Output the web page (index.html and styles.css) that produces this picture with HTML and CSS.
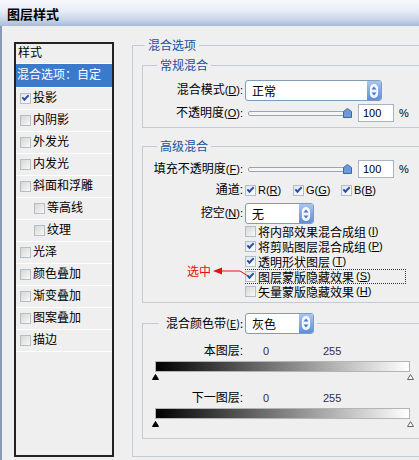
FILE: index.html
```html
<!DOCTYPE html>
<html lang="zh-CN">

<head>
    <meta charset="UTF-8">
    <meta name="viewport" content="width=device-width, initial-scale=1.0">
    <title>图层样式</title>
    <link rel="stylesheet" href="styles.css">
</head>

<body>
    <div class="titlebar">图层样式</div>

    <div class="content">
        <ul class="styles-list">
            <li class="head">样式</li>
            <li class="active">混合选项：自定</li>
            <li><span class="cb on"></span>投影</li>
            <li><span class="cb"></span>内阴影</li>
            <li><span class="cb"></span>外发光</li>
            <li><span class="cb"></span>内发光</li>
            <li><span class="cb"></span>斜面和浮雕</li>
            <li class="sub"><span class="cb"></span>等高线</li>
            <li class="sub"><span class="cb"></span>纹理</li>
            <li><span class="cb"></span>光泽</li>
            <li><span class="cb"></span>颜色叠加</li>
            <li><span class="cb"></span>渐变叠加</li>
            <li><span class="cb"></span>图案叠加</li>
            <li><span class="cb"></span>描边</li>
        </ul>

        <fieldset class="panel">
            <legend>混合选项</legend>

            <!-- 常规混合 -->
            <fieldset class="group">
                <legend>常规混合</legend>
                <div class="row row-mode">
                    <span class="label">混合模式<span class="key">(<u>D</u>):</span></span>
                    <div class="select select-mode"><span>正常</span><span class="spin"><svg width="8" height="14" viewBox="0 0 8 14"><rect x="0.5" y="0.5" width="7" height="13" rx="3.5" fill="#eef4fd" stroke="#fff"/><path d="M4 2.5 L6.5 5.5 H1.5 Z M4 11.5 L6.5 8.5 H1.5 Z" fill="#4a78c4"/></svg></span></div>
                </div>
                <div class="row row-amount">
                    <span class="label">不透明度<span class="key">(<u>O</u>):</span></span>
                    <div class="amount">
                        <span class="track"></span>
                        <svg class="thumb" width="9" height="10" viewBox="0 0 9 10"><path d="M0.5 9.5 V3.5 L4.5 0.5 L8.5 3.5 V9.5 Z" fill="#6f9ad8" stroke="#3f68a8"/></svg>
                        <span class="num-box">100</span>
                        <span class="pct">%</span>
                    </div>
                </div>
            </fieldset>

            <!-- 高级混合 -->
            <fieldset class="group group-adv">
                <legend>高级混合</legend>
                <div class="row row-fill">
                    <span class="label">填充不透明度<span class="key">(<u>F</u>):</span></span>
                    <div class="amount">
                        <span class="track"></span>
                        <svg class="thumb" width="9" height="10" viewBox="0 0 9 10"><path d="M0.5 9.5 V3.5 L4.5 0.5 L8.5 3.5 V9.5 Z" fill="#6f9ad8" stroke="#3f68a8"/></svg>
                        <span class="num-box">100</span>
                        <span class="pct">%</span>
                    </div>
                </div>
                <div class="row row-channels">
                    <span class="label">通道:</span>
                    <div class="channels">
                        <span class="channel"><span class="cb on"></span><span class="key">R(<u>R</u>)</span></span>
                        <span class="channel"><span class="cb on"></span><span class="key">G(<u>G</u>)</span></span>
                        <span class="channel"><span class="cb on"></span><span class="key">B(<u>B</u>)</span></span>
                    </div>
                </div>
                <div class="row row-knock">
                    <span class="label">挖空<span class="key">(<u>N</u>):</span></span>
                    <div class="select select-short"><span>无</span><span class="spin"><svg width="8" height="14" viewBox="0 0 8 14"><rect x="0.5" y="0.5" width="7" height="13" rx="3.5" fill="#eef4fd" stroke="#fff"/><path d="M4 2.5 L6.5 5.5 H1.5 Z M4 11.5 L6.5 8.5 H1.5 Z" fill="#4a78c4"/></svg></span></div>
                </div>
                <div class="checks">
                    <div class="check"><span class="cb"></span>将内部效果混合成组<span class="key">(<u>I</u>)</span></div>
                    <div class="check"><span class="cb on"></span>将剪贴图层混合成组<span class="key">(<u>P</u>)</span></div>
                    <div class="check"><span class="cb on"></span>透明形状图层<span class="key">(<u>T</u>)</span></div>
                    <div class="check focus">
                        <span class="cb on"></span>图层蒙版隐藏效果<span class="key">(<u>S</u>)</span>
                        <span class="note">选中</span>
                        <svg class="note-arrow" width="40" height="14" viewBox="0 0 40 14"><path d="M1 5 L10 1.5 V8.5 Z" fill="#e41010"/><path d="M10 5 H28 L36 10" fill="none" stroke="#e41010"/></svg>
                    </div>
                    <div class="check"><span class="cb"></span>矢量蒙版隐藏效果<span class="key">(<u>H</u>)</span></div>
                </div>
            </fieldset>

            <!-- 混合颜色带 -->
            <fieldset class="group group-band">
                <legend>
                    <div class="band-head">
                        <span class="band-label">混合颜色带<span class="key">(<u>E</u>):</span></span>
                        <div class="select select-short"><span>灰色</span><span class="spin"><svg width="8" height="14" viewBox="0 0 8 14"><rect x="0.5" y="0.5" width="7" height="13" rx="3.5" fill="#eef4fd" stroke="#fff"/><path d="M4 2.5 L6.5 5.5 H1.5 Z M4 11.5 L6.5 8.5 H1.5 Z" fill="#4a78c4"/></svg></span></div>
                    </div>
                </legend>

                <div class="row row-range">
                    <span class="label">本图层:</span>
                    <div class="range"><span class="lo">0</span><span class="hi">255</span></div>
                </div>
                <div class="ramp"></div>
                <div class="stops">
                    <svg width="7" height="6" viewBox="0 0 7 6"><path d="M3.5 0.5 L6.5 5.5 H0.5 Z" fill="#000" stroke="#000"/></svg>
                    <svg width="7" height="6" viewBox="0 0 7 6"><path d="M3.5 0.5 L6.5 5.5 H0.5 Z" fill="#fff" stroke="#666"/></svg>
                </div>

                <div class="row row-range row-under">
                    <span class="label">下一图层:</span>
                    <div class="range"><span class="lo">0</span><span class="hi">255</span></div>
                </div>
                <div class="ramp"></div>
                <div class="stops">
                    <svg width="7" height="6" viewBox="0 0 7 6"><path d="M3.5 0.5 L6.5 5.5 H0.5 Z" fill="#000" stroke="#000"/></svg>
                    <svg width="7" height="6" viewBox="0 0 7 6"><path d="M3.5 0.5 L6.5 5.5 H0.5 Z" fill="#fff" stroke="#666"/></svg>
                </div>
            </fieldset>
        </fieldset>
    </div>
</body>

</html>
```

FILE: styles.css
```css
body {
    margin: 0;
    width: 419px;
    height: 460px;
    overflow: hidden;
    background-color: #efefef;
    font-family: "Liberation Sans", "Noto Sans CJK SC", sans-serif;
    font-size: 12px;
    line-height: 15px;
    color: #000;
}

.titlebar {
    height: 26px;
    padding-left: 7px;
    line-height: 27px;
    font-family: "Noto Sans CJK SC", sans-serif;
    font-size: 13px;
    font-weight: bold;
    background: linear-gradient(#f5f7fb, #e9eef6 40%, #c9d5e8 75%, #a8bbd8);
}

.content {
    display: flex;
    align-items: flex-start;
    height: 434px;
    padding: 11px 0 0 12px;
    border-left: 2px solid #8a9ab4;
}

/* left list of effects */
.styles-list {
    list-style: none;
    flex-shrink: 0;
    margin: 5px 0 0;
    padding: 0;
    width: 96px;
    height: 411px;
    border: 2px solid #222;
}

.styles-list li {
    display: flex;
    align-items: center;
    height: 21px;
    padding-left: 4px;
    border-bottom: 1px solid #fff;
    white-space: nowrap;
}

.styles-list li.head {
    height: 19px;
    padding-left: 2px;
}

.styles-list li.active {
    height: 23px;
    padding-left: 1px;
    background-color: #3a79cc;
    color: #fff;
}

.styles-list li.sub {
    padding-left: 18px;
}

.styles-list .cb {
    margin-right: 2px;
}

.cb {
    position: relative;
    flex-shrink: 0;
    width: 11px;
    height: 11px;
    box-sizing: border-box;
    border: 1px solid #b3becd;
    background: linear-gradient(135deg, #d6d6d2, #f8f8f6);
}

.cb.on {
    background: linear-gradient(135deg, #dfe4ec, #fff);
}

.cb.on::after {
    content: "";
    position: absolute;
    left: 1px;
    top: 1px;
    width: 5px;
    height: 2px;
    border-left: 2px solid #2a52a3;
    border-bottom: 2px solid #2a52a3;
    transform: rotate(-45deg);
}

/* right side groups */
.panel {
    flex-shrink: 0;
    min-width: 0;
    width: 300px;
    margin: 0 0 0 18px;
    padding: 4px 0 17px 9px;
    border: 1px solid #c3cad6;
    border-right: none;
}

legend {
    padding: 0 3px;
    line-height: 16px;
    color: #21509f;
    font-family: "Noto Sans CJK SC", sans-serif;
}

.panel > legend {
    margin-left: 3px;
}

.group {
    min-width: 0;
    margin: 0;
    padding: 0 0 4px;
    border: 1px solid #c3cad6;
    border-right: none;
}

.group > legend {
    margin-left: 14px;
}

.group-adv {
    margin-top: 10px;
    padding-bottom: 3px;
}

.group-band {
    margin-top: 9px;
    padding-bottom: 11px;
}

.row {
    display: grid;
    grid-template-columns: 100px auto;
    column-gap: 2px;
    align-items: center;
}

.row .label {
    text-align: right;
    white-space: nowrap;
}

.key {
    font-size: 11px;
}

.row-mode {
    height: 21px;
    margin-top: 7px;
}

.row-amount {
    height: 20px;
    margin-top: 2px;
}

.row-fill {
    height: 20px;
    margin-top: 5px;
}

.row-channels {
    height: 16px;
    margin-top: 3px;
}

.row-knock {
    height: 21px;
    margin-top: 5px;
}

.select {
    display: flex;
    align-items: center;
    justify-content: space-between;
    height: 21px;
    box-sizing: border-box;
    padding-left: 6px;
    border: 1px solid #7f9db9;
    border-radius: 3px;
    background-color: #fff;
    font-family: "Noto Sans CJK SC", sans-serif;
}

.select-mode {
    width: 137px;
}

.select-short {
    width: 69px;
}

.spin {
    display: flex;
    align-items: center;
    justify-content: center;
    width: 14px;
    height: 19px;
    border-radius: 0 2px 2px 0;
    background: linear-gradient(#a9c6f0, #5d8edb);
}

.amount {
    display: flex;
    align-items: center;
}

.track {
    width: 98px;
    height: 3px;
    margin-left: 3px;
    border: 1px solid #98a4b6;
    border-radius: 2px;
    background-color: #f6f6f6;
}

.thumb {
    margin-left: -5px;
}

.num-box {
    width: 36px;
    height: 18px;
    box-sizing: border-box;
    margin-left: 6px;
    padding-left: 4px;
    border: 1px solid #a7b4c6;
    background-color: #fff;
    font-size: 11px;
    line-height: 16px;
}

.pct {
    margin-left: 5px;
    font-size: 11px;
}

.channels {
    display: flex;
}

.channel {
    display: flex;
    align-items: center;
    gap: 2px;
    width: 48px;
}

.checks {
    margin-left: 102px;
}

.check {
    position: relative;
    display: flex;
    align-items: center;
    gap: 2px;
    height: 15px;
    line-height: 15px;
    white-space: nowrap;
    font-family: "Noto Sans CJK SC", sans-serif;
}

.check .key {
    font-family: "Liberation Sans", sans-serif;
}

.check.focus {
    width: 161px;
    outline: 1px dotted #333;
    outline-offset: -1px;
}

.note {
    position: absolute;
    left: -58px;
    top: -6px;
    color: #e41010;
}

.note-arrow {
    position: absolute;
    left: -33px;
    top: -3px;
}

/* blend-if ramps */
.band-head {
    display: flex;
    align-items: center;
    color: #000;
}

.group-band > legend {
    margin-left: 16px;
    line-height: 21px;
}

.band-label {
    width: 81px;
    margin-right: 2px;
    text-align: right;
    white-space: nowrap;
}

.row-range {
    height: 14px;
    margin-top: 10px;
}

.row-under {
    margin-top: 11px;
}

.range {
    display: flex;
    font-size: 11px;
    color: #3a2846;
}

.lo {
    width: 78px;
    box-sizing: border-box;
    padding-left: 18px;
}

.ramp {
    width: 255px;
    height: 11px;
    box-sizing: border-box;
    margin: 3px 0 0 12px;
    border: 1px solid #b4b4b4;
    background: linear-gradient(to right, #000, #fff);
}

.stops {
    display: flex;
    justify-content: space-between;
    width: 262px;
    height: 6px;
    margin: 2px 0 0 9px;
}

.stops svg {
    display: block;
}
```
